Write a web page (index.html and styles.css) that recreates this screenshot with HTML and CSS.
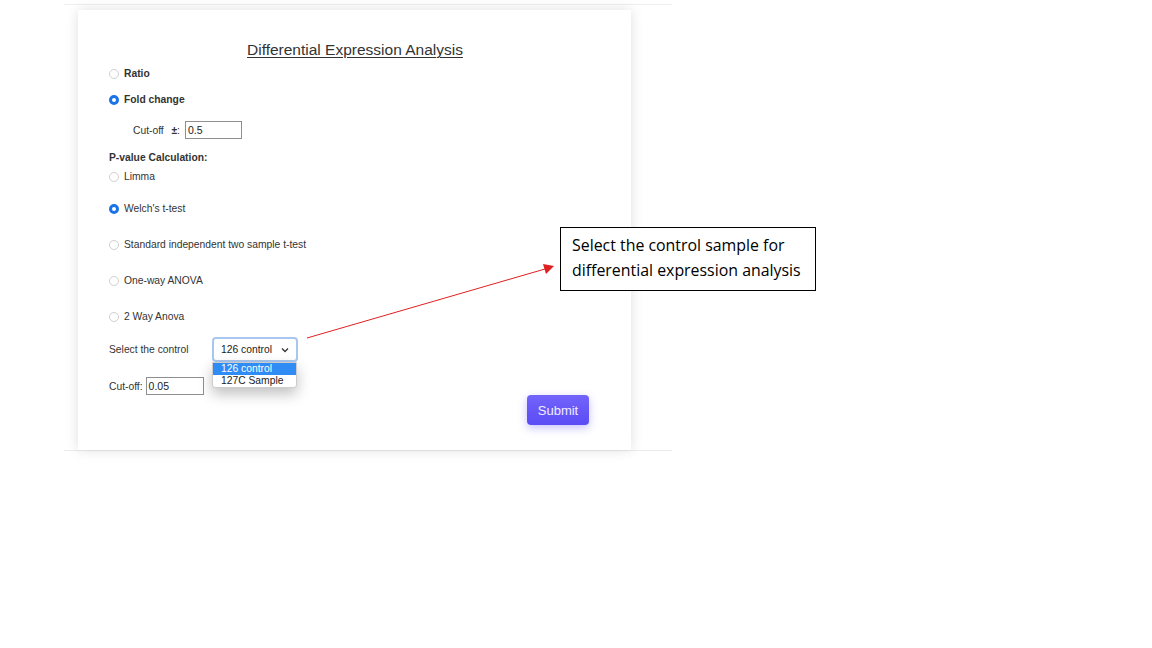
FILE: index.html
```html
<!DOCTYPE html>
<html>
<head>
<meta charset="utf-8">
<link rel="stylesheet" href="styles.css">
</head>
<body>
<div class="frame">
  <div class="card">
    <h1 class="title">Differential Expression Analysis</h1>
    <div class="opt bold first"><span class="radio"></span>Ratio</div>
    <div class="opt bold fold"><span class="radio on"></span>Fold change</div>
    <div class="cutrow"><span>Cut-off&nbsp; <b>±</b>:</span><span class="input w57">0.5</span></div>
    <div class="pv">P-value Calculation:</div>
    <div class="opt limma"><span class="radio"></span>Limma</div>
    <div class="opt gap1"><span class="radio on"></span>Welch's t-test</div>
    <div class="opt gap2"><span class="radio"></span>Standard independent two sample t-test</div>
    <div class="opt gap2"><span class="radio"></span>One-way ANOVA</div>
    <div class="opt gap2"><span class="radio"></span>2 Way Anova</div>
    <div class="selrow">
      <span class="sellabel">Select the control</span>
      <div class="selwrap">
        <div class="select">126 control<svg class="chev" width="8" height="6" viewBox="0 0 8 6"><path d="M1 1.5 L4 4.5 L7 1.5" fill="none" stroke="#333" stroke-width="1.3"/></svg></div>
        <div class="menu">
          <div class="item active">126 control</div>
          <div class="item">127C Sample</div>
        </div>
      </div>
    </div>
    <div class="cutrow2"><span>Cut-off:</span><span class="input w58">0.05</span></div>
    <div class="btnrow"><button class="submit">Submit</button></div>
  </div>
</div>
<div class="callout">Select the control sample for<br>differential expression analysis</div>
<svg class="arrow" width="1152" height="648" viewBox="0 0 1152 648">
  <line x1="307" y1="338" x2="545" y2="269" stroke="#e02020" stroke-width="1"/>
  <polygon points="554,266 543,264 546,274" fill="#e02020"/>
</svg>
</body>
</html>
```
FILE: styles.css
```css
* { box-sizing: border-box; }
body {
  margin: 0;
  background: #fff;
  font-family: "Liberation Sans", Arial, sans-serif;
  color: #333;
  width: 1152px;
  height: 648px;
  position: relative;
  overflow: hidden;
}
.frame {
  margin: 4px 0 0 64px;
  width: 608px;
  height: 447px;
  border-top: 1px solid #efefef;
  border-bottom: 1px solid #ececec;
  background: #fff;
  padding: 5px 0 0 14px;
}
.card {
  width: 553px;
  height: 440px;
  background: #fff;
  box-shadow: 0 0 12px rgba(0,0,0,0.13);
  padding: 31px 0 0 31px;
  display: flex;
  flex-direction: column;
  font-size: 10.3px;
}
.title {
  margin: 0 0 0 138px;
  font-weight: normal;
  font-size: 15.5px;
  text-decoration: underline;
  text-underline-offset: 2px;
  text-decoration-thickness: 1px;
  color: #333;
  line-height: 18px;
  align-self: flex-start;
}
.opt {
  display: flex;
  align-items: center;
  height: 12px;
  line-height: 12px;
}
.opt.bold { font-weight: bold; }
.first { margin-top: 9px; }
.fold { margin-top: 14px; }
.radio {
  width: 10px;
  height: 10px;
  border-radius: 50%;
  border: 1px solid #d0d0d0;
  background: #fff;
  margin-right: 5px;
  flex: none;
}
.radio.on { border: 3px solid #1a73e8; }
.cutrow {
  display: flex;
  align-items: center;
  margin: 15px 0 0 24px;
  gap: 5px;
}
.cutrow b { margin-left: 2px; }
.input {
  display: inline-block;
  border: 1px solid #8f8f8f;
  height: 18px;
  line-height: 16px;
  padding-left: 2px;
  font-size: 10.5px;
  color: #222;
}
.w57 { width: 57px; }
.w58 { width: 58px; height: 18px; margin-left: 2px; }
.pv {
  font-weight: bold;
  margin-top: 13px;
  line-height: 12px;
}
.limma { margin-top: 7px; }
.gap1 { margin-top: 20px; }
.gap2 { margin-top: 24px; }
.selrow {
  display: flex;
  align-items: center;
  margin-top: 14px;
}
.sellabel { width: 103px; }
.selwrap { position: relative; }
.select {
  width: 86px;
  height: 25px;
  border: 2px solid #a8c6f0;
  border-radius: 4px;
  padding: 0 0 0 7px;
  display: flex;
  align-items: center;
  gap: 8px;
  color: #222;
}
.chev { margin-left: 1px; }
.menu {
  position: absolute;
  left: 0;
  top: 25px;
  width: 85px;
  background: #fff;
  border: 1px solid #ccc;
  border-radius: 0 0 3px 3px;
  box-shadow: 0 6px 14px rgba(0,0,0,0.25);
}
.item {
  height: 12px;
  line-height: 12px;
  padding-left: 8px;
  color: #222;
}
.item.active { background: #2f8cf5; color: #fff; }
.cutrow2 {
  display: flex;
  align-items: center;
  margin-top: 15px;
  gap: 1px;
}
.btnrow {
  display: flex;
  justify-content: flex-end;
  padding-right: 42px;
  margin-top: 0;
}
.submit {
  width: 62px;
  height: 30px;
  border: none;
  border-radius: 4px;
  background: linear-gradient(#7364fb, #5b4bf5);
  color: #f0eeff;
  font-family: "Liberation Sans", Arial, sans-serif;
  font-size: 13px;
  box-shadow: 0 3px 8px rgba(91,75,245,0.35);
}
.callout {
  position: absolute;
  left: 560px;
  top: 227px;
  width: 256px;
  height: 64px;
  border: 1px solid #000;
  background: #fff;
  padding: 5px 0 0 11px;
  font-family: "Open Sans", sans-serif;
  font-size: 15.9px;
  line-height: 25px;
  color: #000;
}
.arrow {
  position: absolute;
  left: 0;
  top: 0;
  pointer-events: none;
}
```
